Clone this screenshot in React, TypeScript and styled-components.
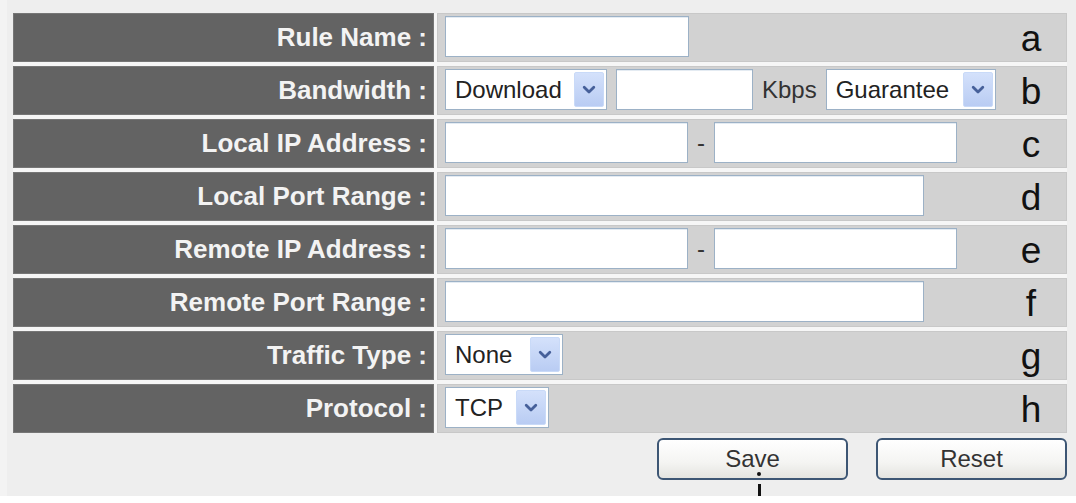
import React from 'react'
import styled, { createGlobalStyle } from 'styled-components'

const GlobalStyle = createGlobalStyle`
  html, body {
    margin: 0;
    padding: 0;
    background: #ffffff;
    font-family: "Liberation Sans", Arial, sans-serif;
  }
`

const Page = styled.div`
  height: 496px;
  box-sizing: border-box;
  padding: 13px 9px 0 6px;
  background: #eeeeee;
  border-left: 7px solid #f3f3f3;
`
const Form = styled.div`
  display: grid;
  grid-template-columns: 421px 630px;
  grid-auto-rows: 49px;
  column-gap: 3px;
  row-gap: 4px;
  background: #f6f6f6;
  width: 1054px;
`
const Label = styled.div`
  display: flex;
  align-items: center;
  justify-content: flex-end;
  padding-right: 7px;
  background: #636363;
  box-shadow: inset 0 0 0 1px #767676;
  color: #f3f3f3;
  font-size: 26px;
  font-weight: bold;
  white-space: nowrap;
`
const Field = styled.div`
  display: flex;
  align-items: center;
  gap: 9px;
  padding: 0 0 2px 8px;
  background: #d2d2d2;
  box-shadow: inset 0 0 0 1px #c8c8c8;
`
const Mark = styled.span`
  margin-left: auto;
  width: 48px;
  margin-right: 12px;
  padding-top: 3px;
  text-align: center;
  font-size: 37px;
  line-height: 1;
  color: #111111;
`
const TextBox = styled.input<{ $w: number }>`
  width: ${(p) => p.$w}px;
  height: 41px;
  box-sizing: border-box;
  margin: 0;
  padding: 0 8px;
  border: 1px solid #9cb1c6;
  box-shadow: inset 0 1px 0 #e4ebf2;
  background: #ffffff;
  font-family: inherit;
  font-size: 24px;
  outline: none;
`
const Unit = styled.span`
  font-size: 24px;
  color: #333333;
`
const SelectBox = styled.div<{ $w: number }>`
  width: ${(p) => p.$w}px;
  height: 41px;
  box-sizing: border-box;
  display: flex;
  align-items: center;
  justify-content: space-between;
  padding: 2px 2px 2px 9px;
  border: 1px solid #9cb1c6;
  background: #ffffff;
`
const SelectValue = styled.span`
  font-size: 24px;
  color: #222222;
`
const ArrowButton = styled.span`
  width: 30px;
  align-self: stretch;
  display: flex;
  align-items: center;
  justify-content: center;
  box-sizing: border-box;
  border: 1px solid #c9daf8;
  border-radius: 2px;
  background: linear-gradient(#d4e1fb, #b9ccf3);
`
const Actions = styled.div`
  display: flex;
  justify-content: flex-end;
  gap: 28px;
  width: 1054px;
  margin-top: 5px;
`
const ButtonWrap = styled.div`
  position: relative;
`
const Button = styled.button`
  width: 191px;
  height: 42px;
  box-sizing: border-box;
  border: 2px solid #3d5674;
  border-radius: 6px;
  background: linear-gradient(#ffffff, #f4f4f2 60%, #e4e4e0);
  color: #333333;
  font-family: inherit;
  font-size: 24px;
  padding: 0 0 1px;
`
const Callout = styled.div`
  position: absolute;
  left: 100px;
  top: 34px;
  display: flex;
  flex-direction: column;
  align-items: center;
  gap: 8px;
`
const Dot = styled.span`
  width: 4px;
  height: 4px;
  border-radius: 50%;
  background: #111111;
`
const Stem = styled.span`
  width: 3px;
  height: 22px;
  background: #111111;
`

const Chevron = () => (
  <svg width="14" height="10" viewBox="0 0 14 10">
    <path d="M2.2 2.2 L7 7 L11.8 2.2" fill="none" stroke="#46609a" strokeWidth="2.8" strokeLinecap="round" strokeLinejoin="round" />
  </svg>
)

const DropDown = ({ value, width }: { value: string; width: number }) => (
  <SelectBox $w={width}>
    <SelectValue>{value}</SelectValue>
    <ArrowButton><Chevron /></ArrowButton>
  </SelectBox>
)

const IpRange = () => (
  <>
    <TextBox $w={243} />
    <Unit>-</Unit>
    <TextBox $w={243} />
  </>
)

const rows = [
  { label: 'Rule Name :', mark: 'a', content: <TextBox $w={244} /> },
  {
    label: 'Bandwidth :',
    mark: 'b',
    content: (
      <>
        <DropDown value="Download" width={162} />
        <TextBox $w={137} />
        <Unit>Kbps</Unit>
        <DropDown value="Guarantee" width={170} />
      </>
    ),
  },
  { label: 'Local IP Address :', mark: 'c', content: <IpRange /> },
  { label: 'Local Port Range :', mark: 'd', content: <TextBox $w={479} /> },
  { label: 'Remote IP Address :', mark: 'e', content: <IpRange /> },
  { label: 'Remote Port Range :', mark: 'f', content: <TextBox $w={479} /> },
  { label: 'Traffic Type :', mark: 'g', content: <DropDown value="None" width={118} /> },
  { label: 'Protocol :', mark: 'h', content: <DropDown value="TCP" width={104} /> },
]

const App = () => {
  return (
    <Page>
      <GlobalStyle />
      <Form>
        {rows.map((r) => (
          <React.Fragment key={r.mark}>
            <Label>{r.label}</Label>
            <Field>
              {r.content}
              <Mark>{r.mark}</Mark>
            </Field>
          </React.Fragment>
        ))}
      </Form>
      <Actions>
        <ButtonWrap>
          <Button>Save</Button>
          <Callout>
            <Dot />
            <Stem />
          </Callout>
        </ButtonWrap>
        <ButtonWrap>
          <Button>Reset</Button>
        </ButtonWrap>
      </Actions>
    </Page>
  )
}

export default App
